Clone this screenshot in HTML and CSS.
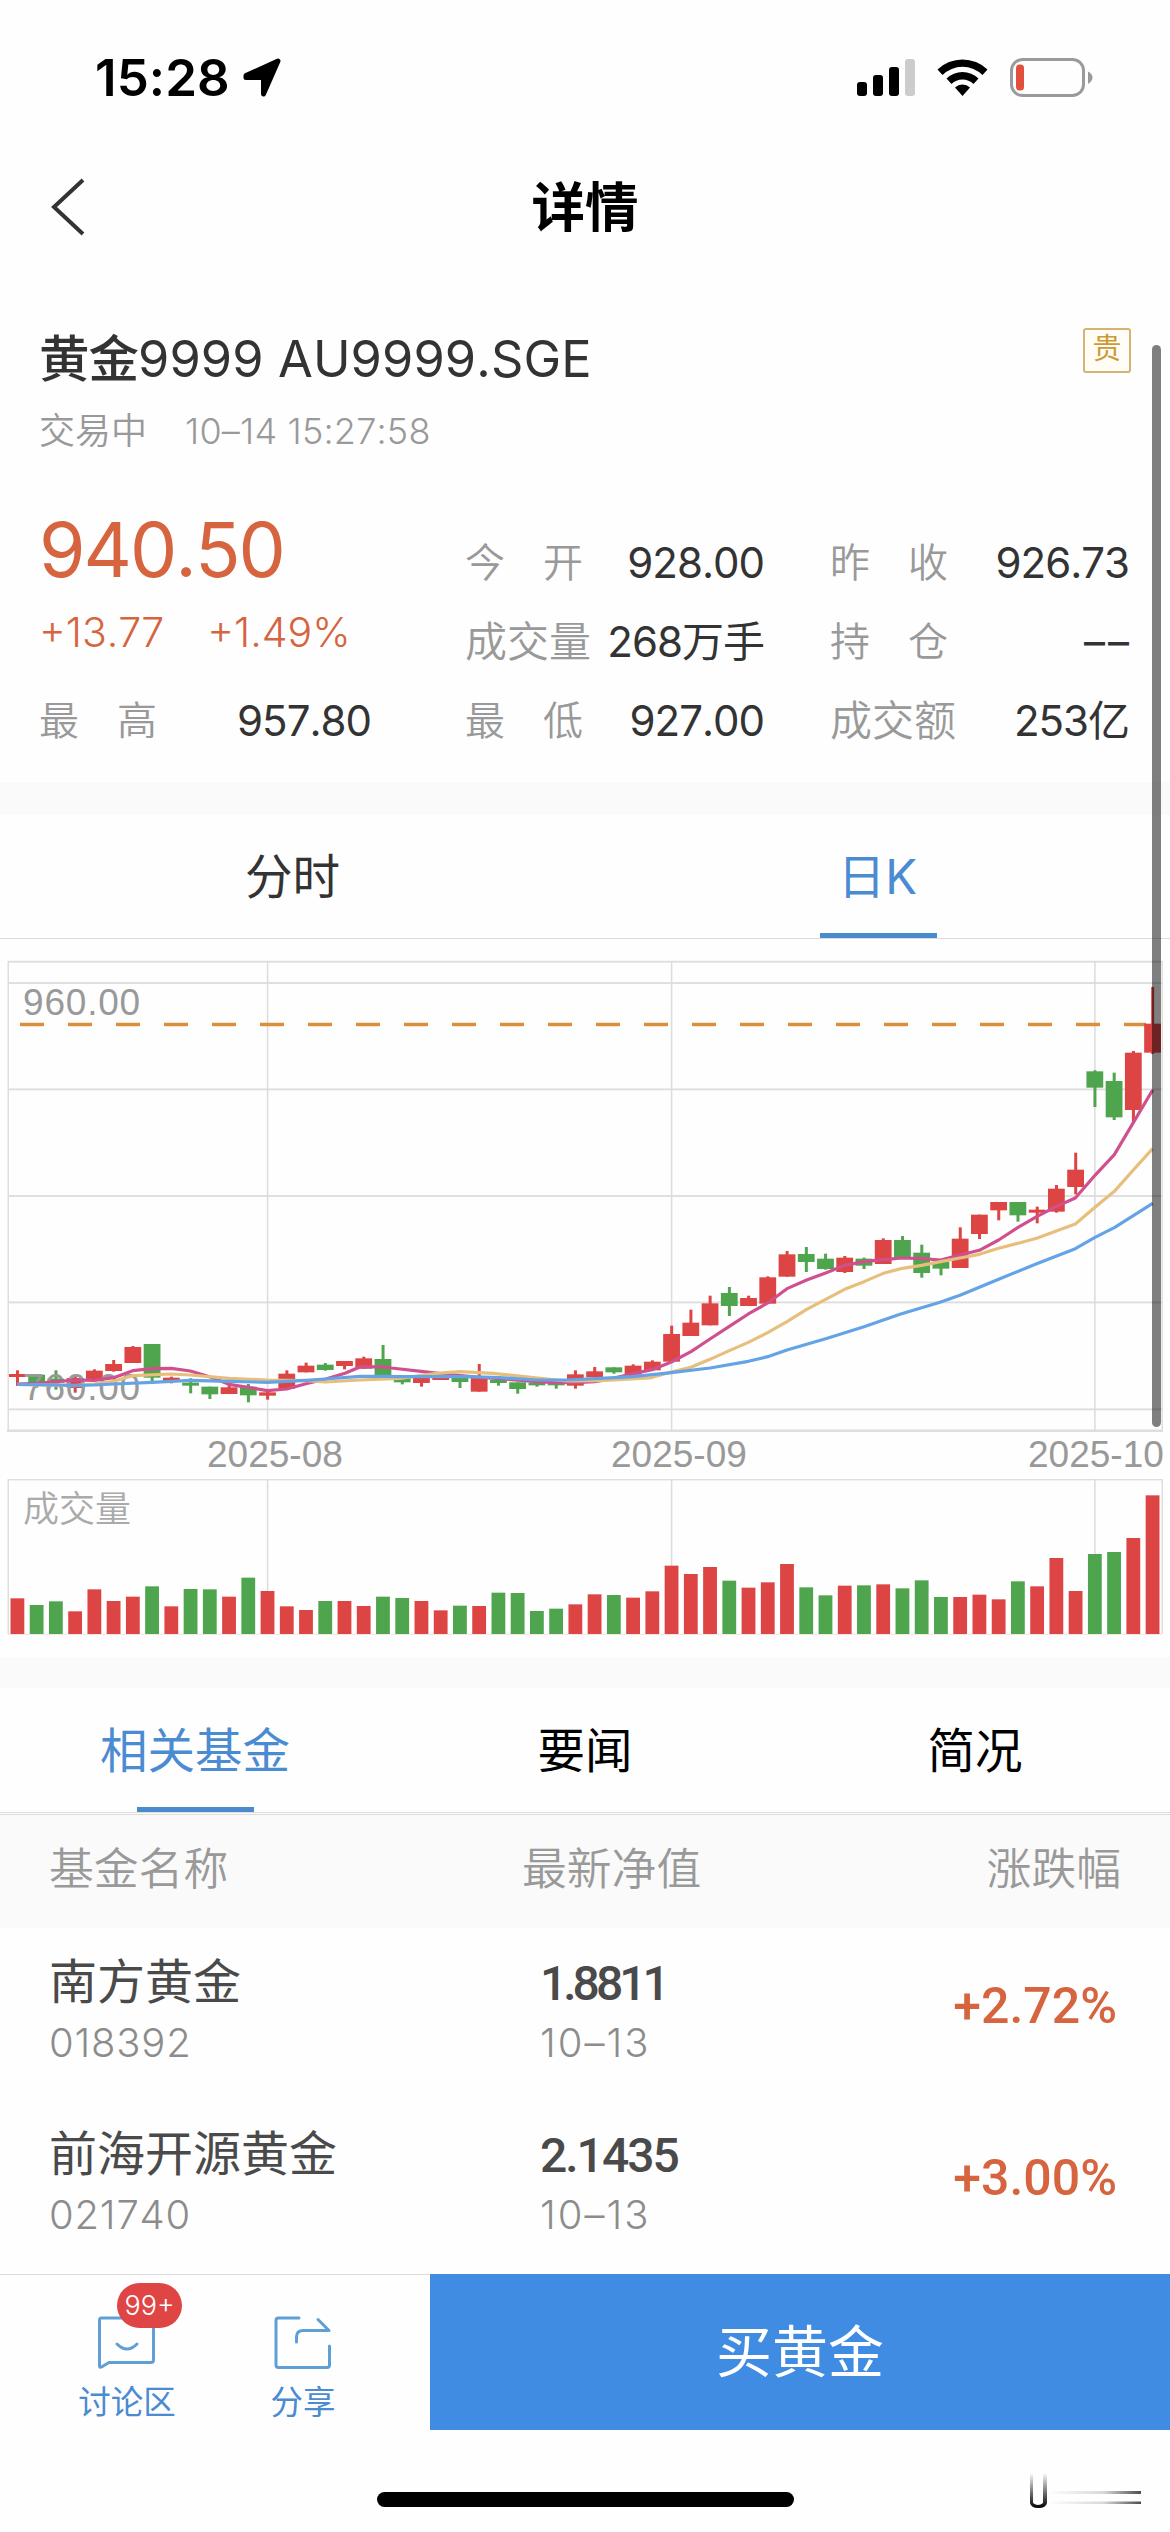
FILE: index.html
```
<!DOCTYPE html>
<html lang="zh-CN">

<head>
    <meta charset="UTF-8">
    <meta name="viewport" content="width=device-width, initial-scale=1.0">
    <title>详情</title>
    <link rel="stylesheet" href="styles.css">
</head>

<body>
    <div class="page">
        <!-- 状态栏 -->
        <div class="status">
            <span class="time">15:28</span>
            <svg class="arrow" width="40" height="40" viewBox="0 0 40 40">
                <path d="M3 17.500 35 3 20.500 36V19.500H3Z" stroke="#000" stroke-width="5" stroke-linejoin="round"/>
            </svg>
            <svg class="signal" width="236" height="40" viewBox="0 0 236 40">
                <rect x="0" y="24" width="10" height="14" rx="3"/>
                <rect x="16" y="17" width="10" height="21" rx="3"/>
                <rect x="32" y="9" width="10" height="29" rx="3"/>
                <rect x="48" y="1" width="10" height="37" rx="3" fill="#ccc"/>
                <path d="M80.500 11.500A36 36 0 0 1 130.500 11.500L125.500 17A28.500 28.500 0 0 0 85.500 17Z"/>
                <path d="M89.500 20.500A23 23 0 0 1 121.500 20.500L116.500 26A15.600 15.600 0 0 0 94.500 26Z"/>
                <path d="M98 29.500A11 11 0 0 1 113 29.500L105.500 38Z"/>
                <rect x="154.500" y="1.500" width="72" height="36" rx="11" fill="none" stroke="#999a9d" stroke-width="3"/>
                <rect x="159" y="6.500" width="8" height="26" rx="3.500" fill="#e2503d"/>
                <path d="M231 13.500Q235.500 16 235.500 19.500T231 26Z" fill="#999a9d"/>
            </svg>
        </div>

        <!-- 标题 -->
        <div class="nav">
            <svg class="back" width="36" height="60" viewBox="0 0 36 60">
                <path d="M33 3 4 30 33 57" fill="none" stroke="#333" stroke-width="4"/>
            </svg>
            <h1>详情</h1>
        </div>

        <!-- 行情 -->
        <div class="quote">
            <div class="name">
                <span><b>黄金</b>9999 AU9999.SGE</span>
                <i class="tag">贵</i>
            </div>
            <div class="state"><span>交易中</span><span class="date">10–14 15:27:58</span></div>
            <div class="detail">
                <div class="col col1">
                    <div class="price">940.50</div>
                    <div class="change"><span>+13.77</span><span>+1.49%</span></div>
                    <div class="item"><label><s>最</s><s>高</s></label><em>957.80</em></div>
                </div>
                <div class="col col2">
                    <div class="item"><label><s>今</s><s>开</s></label><em>928.00</em></div>
                    <div class="item"><label class="three">成交量</label><em>268万手</em></div>
                    <div class="item"><label><s>最</s><s>低</s></label><em>927.00</em></div>
                </div>
                <div class="col col3">
                    <div class="item"><label><s>昨</s><s>收</s></label><em>926.73</em></div>
                    <div class="item"><label><s>持</s><s>仓</s></label><em class="none">––</em></div>
                    <div class="item"><label class="three">成交额</label><em>253亿</em></div>
                </div>
            </div>
        </div>

        <div class="tabs chart-tabs">
            <div>分时</div>
            <div class="on">日K</div>
        </div>

        <!-- K线和成交量，内容由下面的脚本画 -->
        <svg class="chart" id="chart" width="1170" height="718" viewBox="0 939 1170 718"></svg>

        <div class="tabs fund-tabs">
            <div class="on">相关基金</div>
            <div>要闻</div>
            <div>简况</div>
        </div>

        <!-- 基金列表 -->
        <div class="row head">
            <div class="c1">基金名称</div>
            <div class="c2">最新净值</div>
            <div class="c3">涨跌幅</div>
        </div>
        <div class="row fund">
            <div class="c1"><p>南方黄金</p><small>018392</small></div>
            <div class="c2"><p class="tight">1.8811</p><small>10–13</small></div>
            <div class="c3">+2.72%</div>
        </div>
        <div class="row fund">
            <div class="c1"><p>前海开源黄金</p><small>021740</small></div>
            <div class="c2"><p>2.1435</p><small>10–13</small></div>
            <div class="c3">+3.00%</div>
        </div>

        <!-- 底部 -->
        <div class="footer">
            <div class="tools">
                <div class="tool talk">
                    <svg width="60" height="56" viewBox="0 0 60 56">
                        <path d="M2.500 51V5Q2.500 3 4.500 3H54Q56.500 3 56.500 5V45Q56.500 47.500 54 47.500H12L4.500 52Q2.500 53 2.500 51ZM20 29Q30 39 40 29"/>
                    </svg>
                    <i class="num">99+</i>
                    <span>讨论区</span>
                </div>
                <div class="tool share">
                    <svg width="60" height="56" viewBox="0 0 60 56">
                        <path d="M26 3H5.500Q3 3 3 5.500V50Q3 52.500 5.500 52.500H54Q56.500 52.500 56.500 50V31M23.500 27V21.500Q24 15.500 30 15.500H56L45 4.500"/>
                    </svg>
                    <span>分享</span>
                </div>
            </div>
            <div class="buy">买黄金</div>
        </div>
        <div class="bottom">
            <div class="home"></div>
            <svg class="mark" width="190" height="44" viewBox="0 0 190 44">
                <defs>
                    <linearGradient id="fadeX"><stop offset="0" stop-color="#000" stop-opacity="0"/><stop offset=".6" stop-color="#000" stop-opacity=".15"/><stop offset="1" stop-color="#000" stop-opacity=".7"/></linearGradient>
                    <linearGradient id="fadeY" x2="0" y2="1"><stop offset="0" stop-color="#000" stop-opacity="0"/><stop offset="1" stop-color="#000"/></linearGradient>
                </defs>
                <path d="M74 4H77V34Q82 38 87 34V4H91V34Q90 39 82.500 39T74 34Z" fill="url(#fadeY)"/>
                <rect x="92" y="22" width="93" height="3" fill="url(#fadeX)"/>
                <rect x="92" y="32.500" width="93" height="2.500" fill="url(#fadeX)"/>
            </svg>
        </div>
        <div class="scroll"></div>
    </div>

    <script>
        var RED='#dd4444';
        var GREEN='#4fa54d';
        var STEP=19.24;
        var LEFT=17.4;
        // 每根K线：颜色 实体上 实体下 最高 最低 成交量顶点（3倍图坐标）
        var data=[
            ['r',1272,1281,1261,1308,535],['g',1274,1298,1274,1313,555],['g',1286,1298,1261,1319,544],['r',1284,1314,1278,1328,574],
            ['r',1262,1290,1258,1292,508],['r',1242,1263,1230,1265,543],['r',1191,1239,1188,1239,530],['g',1182,1283,1182,1295,499],
            ['r',1283,1293,1280,1300,559],['g',1298,1307,1285,1330,507],['g',1310,1333,1310,1347,508],['r',1312,1332,1300,1332,530],
            ['g',1310,1336,1302,1357,473],['r',1327,1337,1320,1349,513],['r',1271,1316,1261,1316,559],['r',1247,1267,1238,1267,570],
            ['g',1244,1260,1239,1262,543],['r',1233,1248,1233,1258,543],['r',1225,1256,1220,1256,558],['g',1227,1276,1185,1276,530],
            ['g',1284,1297,1284,1303,534],['r',1281,1299,1281,1310,543],['r',1283,1290,1283,1290,571],['g',1282,1296,1282,1314,557],
            ['r',1282,1325,1242,1325,558],['g',1290,1299,1290,1307,518],['g',1297,1317,1297,1331,519],['g',1298,1306,1282,1310,573],
            ['g',1298,1306,1298,1316,566],['r',1273,1307,1261,1316,553],['r',1264,1282,1251,1282,523],['g',1252,1267,1252,1271,525],
            ['r',1247,1274,1243,1274,533],['r',1235,1261,1231,1261,514],['r',1152,1235,1127,1235,437],['r',1118,1158,1079,1158,462],
            ['r',1060,1126,1037,1126,441],['g',1029,1068,1011,1098,482],['r',1044,1068,1037,1068,503],['r',982,1061,979,1061,487],
            ['r',913,980,903,980,432],['g',912,936,891,966,502],['g',926,957,911,959,526],['r',923,966,918,969,497],
            ['g',926,947,923,957,496],['r',870,942,865,942,493],['g',870,925,858,925,505],['g',908,969,884,983,481],
            ['g',935,956,935,976,531],['r',866,954,832,954,531],['r',794,852,794,867,524],['r',756,781,756,811,538],
            ['g',756,796,756,815,484],['r',779,788,770,820,499],['r',716,785,705,788,414],['r',659,711,608,733,513],
            ['g',364,413,361,471,402],['g',393,502,368,510,396],['r',308,480,303,517,354],['r',221,308,111,312,226]
        ];
        // 三条均线
        var lines=[
            ['#64a3e6','52,1303 168,1305 225,1306 283,1305 341,1302 456,1297 571,1291 687,1294 802,1297 918,1291 975,1287 1080,1279 1148,1279 1200,1280 1400,1280 1500,1283 1610,1290 1700,1290 1800,1285 1900,1280 2014,1268 2130,1254 2245,1234 2303,1220 2361,1200 2477,1166 2592,1130 2700,1093 2820,1057 2880,1036 2996,988 3110,941 3226,896 3285,862 3343,833 3400,797 3458,760'],
            ['#e6bf7c','52,1303 225,1307 283,1302 341,1294 398,1277 514,1272 571,1275 687,1285 802,1290 918,1292 975,1296 1080,1290 1200,1285 1310,1270 1380,1265 1480,1270 1600,1283 1700,1293 1800,1292 1950,1284 2014,1266 2073,1252 2130,1228 2188,1202 2245,1177 2303,1148 2361,1115 2420,1078 2477,1048 2534,1018 2592,995 2650,970 2707,955 2765,946 2822,935 2880,924 2938,913 2996,895 3110,865 3226,822 3285,772 3343,724 3400,660 3458,596'],
            ['#d0508d','52,1302 110,1300 225,1290 283,1291 341,1283 398,1262 456,1256 514,1255 571,1263 629,1280 687,1303 744,1312 802,1322 860,1317 918,1301 975,1288 1035,1270 1080,1251 1148,1250 1174,1254 1270,1265 1320,1271 1437,1282 1500,1286 1610,1295 1670,1298 1725,1298 1785,1295 1840,1285 1900,1271 1960,1258 2014,1236 2073,1205 2130,1167 2188,1129 2245,1092 2303,1059 2361,1016 2420,990 2477,969 2534,946 2592,935 2650,929 2707,924 2765,926 2822,930 2880,915 2938,901 2996,870 3053,833 3110,800 3168,770 3226,744 3285,676 3343,614 3400,518 3458,420']
        ];
        var html='';

        function y(v){
            return 950+v/3;
        }
        function rect(x,top,w,h,color){
            html+='<rect x="'+x+'" y="'+top+'" width="'+w+'" height="'+h+'" fill="'+color+'"/>';
        }
        function text(x,top,str,cls){
            html+='<text x="'+x+'" y="'+top+'" class="'+cls+'">'+str+'</text>';
        }
        function line(index){
            html+='<polyline points="'+lines[index][1]+'" transform="translate(0 950) scale(.33333)" fill="none" stroke="'+lines[index][0]+'" stroke-width="9.5" stroke-linejoin="round"/>';
        }

        // 网格
        var rows=[35,99,418,738,1057,1378];
        for(var i=0;i<rows.length;i++){
            rect(8,y(rows[i])-0.9,1154,1.9,'#dedede');
        }
        rect(7,1429.5,1156,2.5,'#dedede');
        rect(7.500,961,1.5,470,'#dedede');
        rect(1161.500,961,1.5,470,'#dedede');
        rect(7.500,1479,1.5,155,'#dedede');
        rect(1161.500,1479,1.5,155,'#dedede');
        rect(8,1479,1154,1.4,'#dedede');
        rect(8,1634,1154,1,'#f3e6e4');
        var cols=[13,34,56];
        for(var i=0;i<cols.length;i++){
            var x=LEFT+cols[i]*STEP;
            rect(x-0.7,961,1.5,470,'#dcdcdc');
            rect(x-0.7,1479,1.5,155,'#dcdcdc');
        }

        text(23,1014.500,'960.00','axis price-axis');
        html+='<path d="M20 1024.400H1146" stroke="#d98f3e" stroke-width="3.5" stroke-dasharray="24 24"/>';

        // K线和成交量柱子
        for(var i=0;i<data.length;i++){
            var d=data[i];
            var x=LEFT+i*STEP;
            var color=d[0]=='r'?RED:GREEN;
            rect(x-1.4,y(d[3]),3,(d[4]-d[3])/3,color);
            rect(x-8.4,y(d[1]),16.8,(d[2]-d[1])/3,color);
            rect(x-6.9,1420+d[5]/3,13.8,(642-d[5])/3,color);
        }
        text(23,1399.500,'760.00','axis price-axis');
        line(2);
        line(1);
        line(0);
        text(207,1467,'2025-08','axis month');
        text(611,1467,'2025-09','axis month');
        text(1028,1467,'2025-10','axis month');
        text(23,1522,'成交量','vol');
        document.getElementById('chart').innerHTML=html;
    </script>
</body>

</html>
```
FILE: styles.css
```
*{
    margin: 0;
    padding: 0;
    box-sizing: border-box;
}
body{
    background-color: #fff;
    font-family: Inter, "Noto Sans CJK SC", sans-serif;
    font-kerning: none;
    color: #333;
}
i,em{
    font-style: normal;
}
s{
    text-decoration: none;
}
.page{
    position: relative;
    width: 1170px;
    height: 2532px;
    overflow: hidden;
    background-color: #fefefe;
}
/* 状态栏 */
.status{
    display: flex;
    align-items: center;
    height: 155px;
    padding: 0 77px 0 95px;
    color: #000;
}
.time{
    font-size: 51px;
    font-weight: 600;
    letter-spacing: 0.1px;
    width: 148px;
    white-space: nowrap;
}
.signal{
    margin-left: auto;
}
/* 标题栏 */
.nav{
    display: flex;
    align-items: center;
    height: 104px;
    padding: 0 50px;
}
.nav h1{
    flex: 1;
    margin-right: 36px;
    text-align: center;
    font-size: 53.5px;
    font-weight: 600;
    line-height: 60px;
    padding-top: 2px;
    color: #000;
}
/* 行情 */
.quote{
    height: 523px;
    padding: 75px 39px 0 39px;
}
.name{
    display: flex;
    justify-content: space-between;
    font-size: 50.5px;
    line-height: 50px;
    letter-spacing: 0.1px;
}
.name b{
    font-weight: 500;
    letter-spacing: -1px;
}
.tag{
    width: 48px;
    height: 45px;
    margin-top: -6px;
    border: 2px solid #d3b571;
    border-radius: 3px;
    background-color: #fffdf5;
    color: #cd9b35;
    font-size: 29px;
    line-height: 38px;
    text-align: center;
    letter-spacing: 0;
}
.state{
    margin-top: 25px;
    font-size: 36px;
    line-height: 44px;
    font-weight: 350;
    color: #999;
}
.date{
    margin-left: 38px;
    letter-spacing: 0.2px;
}
.detail{
    display: flex;
    margin-top: 70px;
}
.col{
    width: 299px;
}
.col1{
    width: 332px;
}
.col2{
    margin-left: 94px;
}
.col3{
    margin-left: 66px;
}
.price{
    height: 79px;
    font-size: 75px;
    line-height: 53px;
    letter-spacing: -2px;
    color: #d5643f;
}
.change{
    display: flex;
    gap: 43px;
    height: 79px;
    font-size: 41px;
    line-height: 61px;
    font-weight: 350;
    letter-spacing: 0;
    color: #d5643f;
}
.item{
    display: flex;
    justify-content: space-between;
    height: 79px;
    line-height: 80px;
    font-size: 42px;
    white-space: nowrap;
}
.item label{
    display: flex;
    justify-content: space-between;
    width: 118px;
    font-size: 40px;
    font-weight: 350;
    color: #999;
}
.item .three{
    font-size: 42px;
    width: 126px;
}
.item em{
    letter-spacing: -1px;
}
.item .none{
    font-size: 42px;
    letter-spacing: 3px;
    margin-right: -3px;
}
/* 选项卡 */
.tabs{
    display: flex;
    border-top: 33px solid #fafafa;
    border-bottom: 1px solid #dcdcdc;
    font-size: 47.5px;
}
.tabs div{
    position: relative;
    flex: 1;
    text-align: center;
}
.tabs .on{
    color: #4a8bd2;
}
.tabs .on:after{
    content: "";
    position: absolute;
    left: 50%;
    bottom: 0;
    width: 117px;
    height: 5px;
    margin-left: -58px;
    background-color: #4a8bcd;
}
.chart-tabs{
    height: 157px;
    line-height: 123px;
}
.fund-tabs{
    height: 158px;
    border-top-width: 31px;
    border-bottom: 3px double #dcdcdc;
    line-height: 125px;
    color: #000;
}
/* 图表 */
.chart{
    display: block;
}
.axis{
    font-family: "Liberation Sans", sans-serif;
    font-size: 37px;
    fill: #999;
}
.price-axis{
    letter-spacing: 0.8px;
}
.month{
    font-size: 37px;
}
.vol{
    font-size: 36px;
    font-weight: 350;
    fill: #aaa;
}
/* 列表 */
.row{
    display: flex;
    padding: 0 49px;
}
.c1{
    width: 473px;
}
.c3{
    flex: 1;
    text-align: right;
}
.head{
    height: 113px;
    background-color: #fafafa;
    font-size: 44.8px;
    line-height: 109px;
    font-weight: 350;
    color: #999;
}
.fund{
    height: 172px;
    padding-top: 23px;
}
.fund p{
    font-size: 48px;
    line-height: 62px;
    color: #4a4a4a;
}
.fund small{
    display: block;
    font-size: 40px;
    line-height: 60px;
    font-weight: 350;
    letter-spacing: 0.8px;
    color: #8c8c8c;
}
.fund .c2{
    padding-left: 18px;
}
.fund .c2 p{
    padding-top: 3px;
    line-height: 59px;
    font-family: Roboto, sans-serif;
    font-weight: 500;
    letter-spacing: -2px;
}
.fund .c2 .tight{
    letter-spacing: -4px;
}
.fund .c2 small{
    letter-spacing: 2px;
}
.fund .c3{
    padding-right: 4px;
    font-family: Roboto, sans-serif;
    font-size: 50px;
    font-weight: 500;
    line-height: 110px;
    color: #d5643f;
}
/* 底部 */
.footer{
    display: flex;
    height: 156px;
    margin-top: 2px;
}
.tools{
    display: flex;
    width: 430px;
    padding-left: 67px;
    gap: 56px;
    border-top: 1px solid #ddd;
}
.tool{
    position: relative;
    width: 120px;
    padding-top: 40px;
    text-align: center;
    font-size: 32.5px;
    line-height: 40px;
    color: #4a8bd2;
}
.tool svg{
    display: block;
    margin: 0 auto 12px;
    fill: none;
    stroke: #5f9fd6;
    stroke-width: 3;
    stroke-linejoin: round;
    stroke-linecap: round;
}
.num{
    position: absolute;
    left: 50px;
    top: 8px;
    width: 65px;
    height: 45px;
    border-radius: 23px;
    background-color: #e04545;
    color: #fff;
    font-size: 27px;
    line-height: 45px;
    font-weight: 300;
}
.buy{
    flex: 1;
    background-color: #3f8ce2;
    color: #fff;
    font-size: 56px;
    line-height: 157px;
    text-align: center;
}
.bottom{
    position: relative;
    height: 102px;
    padding-top: 62px;
}
.home{
    width: 417px;
    height: 15px;
    margin: 0 auto;
    border-radius: 8px;
    background-color: #000;
}
.mark{
    position: absolute;
    left: 956px;
    top: 39px;
}
/* 滚动条 */
.scroll{
    position: absolute;
    left: 1152px;
    top: 345px;
    width: 9px;
    height: 1082px;
    border-radius: 5px;
    background-color: rgba(0, 0, 0, 0.5);
}
```
